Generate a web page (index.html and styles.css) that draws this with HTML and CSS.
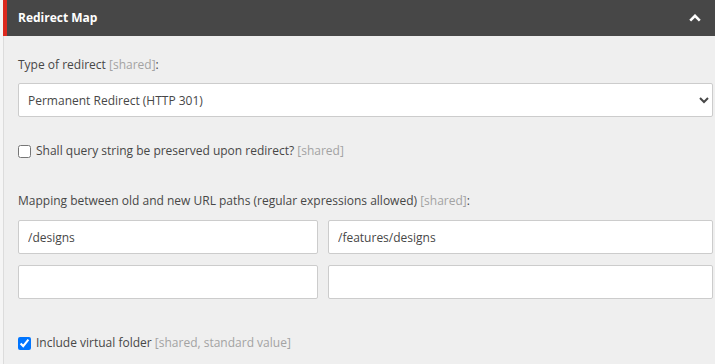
FILE: index.html
```html
<!DOCTYPE html>
<html lang="en">
<head>
    <meta charset="UTF-8">
    <title>Redirect Map</title>
    <link rel="stylesheet" href="styles.css">
</head>
<body>
    <div class="panel">
        <div class="panel-header">
            <span class="panel-title">Redirect Map</span>
            <svg class="collapse" width="12" height="8" viewBox="0 0 12 8">
                <path d="M1.2 6.6 L6 1.8 L10.8 6.6" fill="none" stroke="#fff" stroke-width="2.6"/>
            </svg>
        </div>

        <div class="panel-body">
            <label class="field-label" for="redirect_type">Type of redirect <span class="meta">[shared]</span>:</label>
            <select id="redirect_type" class="field-select">
                <option>Permanent Redirect (HTTP 301)</option>
                <option>Temporary Redirect (HTTP 302)</option>
                <option>Server Transfer</option>
            </select>

            <label class="check-row query-row">
                <input type="checkbox" name="preserve_query">
                <span>Shall query string be preserved upon redirect? <span class="meta">[shared]</span></span>
            </label>

            <div class="field-label mapping-label">Mapping between old and new URL paths (regular expressions allowed) <span class="meta">[shared]</span>:</div>
            <div class="mapping">
                <input type="text" class="field-input" value="/designs">
                <input type="text" class="field-input" value="/features/designs">
                <input type="text" class="field-input">
                <input type="text" class="field-input">
            </div>

            <label class="check-row folder-row">
                <input type="checkbox" name="virtual_folder" checked>
                <span>Include virtual folder <span class="meta">[shared, standard value]</span></span>
            </label>
        </div>
    </div>
</body>
</html>
```

FILE: styles.css
```css
body {
    margin: 0;
    background-color: #f5f5f5;
    font-family: "Open Sans", Arial, sans-serif;
    font-size: 12px;
    color: #474747;
}
.panel {
    margin-left: 3px;
    min-height: 364px;
    background-color: #efefef;
    border-left: 1px solid #dcdcdc;
}
.panel-header {
    height: 36px;
    margin-left: -1px;
    display: flex;
    align-items: center;
    justify-content: space-between;
    padding: 0 14px 0 11px;
    background-color: #474747;
    border-left: 4px solid #dc291e;
}
.panel-title {
    color: #fff;
    font-weight: 700;
    font-size: 12px;
    margin-bottom: 1px;
}
.collapse {
    display: block;
    margin-bottom: 1px;
}
.panel-body {
    padding: 20px 2px 0 14px;
}
.field-label {
    display: block;
    line-height: 18px;
}
.meta {
    color: #a3a3a3;
}
.field-select {
    display: block;
    width: 100%;
    height: 34px;
    margin-top: 9px;
    padding: 0 5px;
    font-family: inherit;
    font-size: 12px;
    color: #474747;
    background-color: #fff;
    border: 1px solid #ccc;
    border-radius: 2px;
}
.check-row {
    display: flex;
    align-items: center;
    gap: 5px;
    line-height: 18px;
}
.check-row input {
    margin: 0;
    width: 13px;
    height: 13px;
}
.query-row {
    margin-top: 25px;
}
.mapping-label {
    margin-top: 32px;
}
.mapping {
    display: grid;
    grid-template-columns: 300px 1fr;
    gap: 11px 10px;
    margin-top: 10px;
}
.field-input {
    box-sizing: border-box;
    height: 34px;
    padding: 0 9px;
    font-family: inherit;
    font-size: 12px;
    color: #474747;
    background-color: #fff;
    border: 1px solid #ccc;
    border-radius: 2px;
    outline: none;
}
.folder-row {
    margin-top: 35px;
}
```
